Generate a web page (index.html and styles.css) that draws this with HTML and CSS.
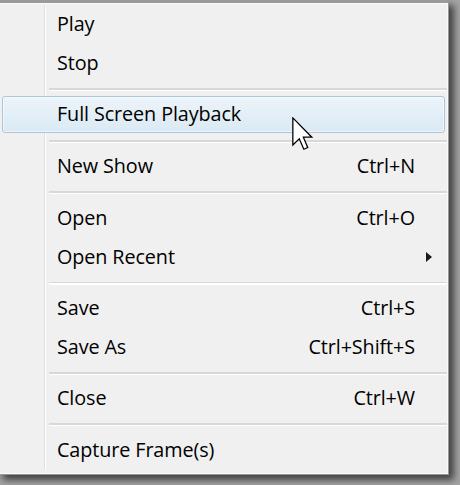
FILE: index.html
```html
<!DOCTYPE html>
<html>
<head>
<meta charset="utf-8">
<link rel="stylesheet" href="styles.css">
</head>
<body>
<div class="menu">
  <ul class="list">
    <li class="item"><span class="label">Play</span><span class="key"></span><span class="sub"></span></li>
    <li class="item"><span class="label">Stop</span><span class="key"></span><span class="sub"></span></li>
    <li class="sep"></li>
    <li class="item hover"><span class="label">Full Screen Playback</span><span class="key"></span><span class="sub"></span></li>
    <li class="sep"></li>
    <li class="item"><span class="label">New Show</span><span class="key">Ctrl+N</span><span class="sub"></span></li>
    <li class="sep"></li>
    <li class="item"><span class="label">Open</span><span class="key">Ctrl+O</span><span class="sub"></span></li>
    <li class="item"><span class="label">Open Recent</span><span class="key"></span><span class="sub"><span class="arrow"></span></span></li>
    <li class="sep"></li>
    <li class="item"><span class="label">Save</span><span class="key">Ctrl+S</span><span class="sub"></span></li>
    <li class="item"><span class="label">Save As</span><span class="key">Ctrl+Shift+S</span><span class="sub"></span></li>
    <li class="sep"></li>
    <li class="item"><span class="label">Close</span><span class="key">Ctrl+W</span><span class="sub"></span></li>
    <li class="sep"></li>
    <li class="item"><span class="label">Capture Frame(s)</span><span class="key"></span><span class="sub"></span></li>
  </ul>
</div>
<svg class="cursor" width="22" height="34" viewBox="0 0 13 20">
  <path d="M0.5,0.5 L0.5,16.5 L4.3,12.8 L7,19 L9.3,18 L6.7,11.9 L11.7,11.9 Z" fill="#ffffff" stroke="#000000" stroke-width="0.75" stroke-linejoin="miter"/>
</svg>
</body>
</html>
```
FILE: styles.css
```css
html, body {
  margin: 0;
  padding: 0;
}
body {
  width: 460px;
  height: 485px;
  overflow: hidden;
  background: #a4a4a4;
  position: relative;
  font-family: "Open Sans", "Noto Sans", "DejaVu Sans", sans-serif;
}
.menu {
  box-sizing: border-box;
  width: 451px;
  height: 475px;
  margin-left: -2px;
  background: #f0f0f0;
  border: 1px solid #979797;
  border-top: 3px solid #9a9a9a;
  box-shadow: inset 0 0 0 1px #fafafa, 5px 5px 7px rgba(0, 0, 0, 0.6);
  padding: 2.6px 3px 0 3px;
}
.list {
  list-style: none;
  margin: 0;
  padding: 0;
  background:
    linear-gradient(to right, transparent 42px, #dedfdf 42px, #dedfdf 43px, #ffffff 43px, #ffffff 44px, transparent 44px);
}
.item {
  box-sizing: border-box;
  height: 38.7px;
  display: grid;
  grid-template-columns: 1fr auto 29px;
  align-items: center;
  padding-left: 54px;
  font-size: 19.8px;
  letter-spacing: -0.1px;
  color: #000000;
  border: 1px solid transparent;
  border-radius: 3px;
}
.item .label, .item .key {
  padding-bottom: 2px;
}
.item.hover {
  border-color: #a9c8dc;
  background: linear-gradient(to bottom, rgba(236, 244, 250, 0.92), rgba(216, 233, 244, 0.92));
  box-shadow: inset 0 0 0 1px rgba(255, 255, 255, 0.5);
  height: 37px;
  margin-bottom: 1.7px;
}
.key {
  text-align: right;
}
.sub {
  position: relative;
  height: 100%;
}
.arrow {
  position: absolute;
  left: 11px;
  top: 13px;
  width: 0;
  height: 0;
  border-top: 5px solid transparent;
  border-bottom: 5px solid transparent;
  border-left: 6px solid #1a1a1a;
}
.sep {
  height: 12.9px;
  margin-left: 47px;
  margin-right: -2px;
  background: linear-gradient(to bottom, transparent 5.5px, #d8d8d8 5.5px, #d8d8d8 7px, #ffffff 7px, #ffffff 8.5px, transparent 8.5px);
}
.cursor {
  position: absolute;
  left: 292px;
  top: 117px;
}
```
